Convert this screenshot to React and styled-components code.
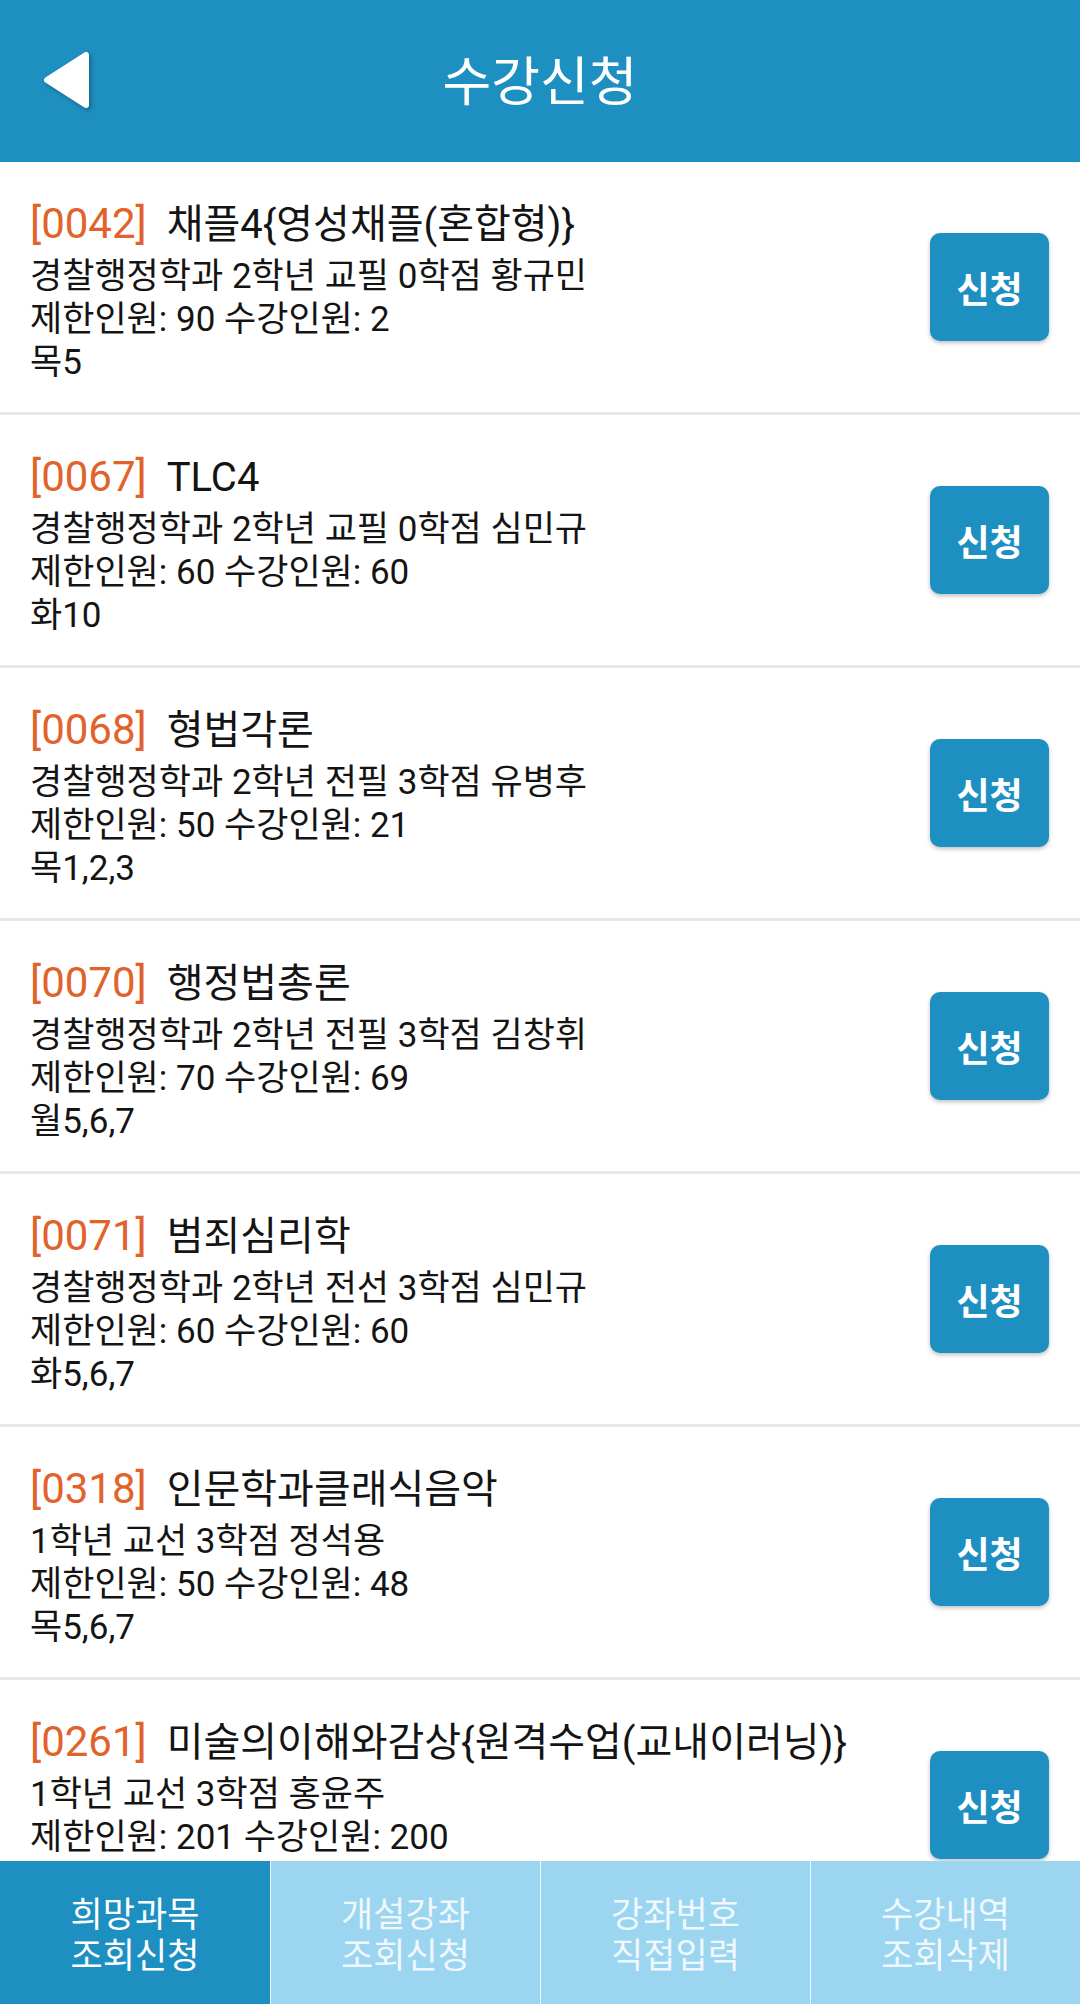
import React from 'react';
import styled, { createGlobalStyle } from 'styled-components'

const GlobalStyle = createGlobalStyle`
  html, body {
    margin: 0;
    padding: 0;
    background: #fff;
  }
  body {
    font-family: "Roboto", "Noto Sans CJK KR", sans-serif;
    -webkit-font-smoothing: antialiased;
  }
`

const Screen = styled.div `
  width: 100%;
  height: 100vh;
  display: flex;
  flex-direction: column;
  overflow: hidden;
  background-color: #fff;
`
const Header = styled.header `
  flex-shrink: 0;
  height: 162px;
  display: grid;
  grid-template-columns: 1fr auto 1fr;
  align-items: center;
  background-color: #1e8fc1;
`
const BackButton = styled.button `
  justify-self: start;
  display: flex;
  align-items: center;
  margin-left: 40px;
  padding: 0;
  border: none;
  background: none;
  cursor: pointer;
  svg{
    filter: drop-shadow(2px 2px 2px rgba(0, 0, 0, 0.3));
  }
`
const Title = styled.h1 `
  margin: 0;
  padding-top: 4px;
  font-size: 53px;
  line-height: 60px;
  font-weight: 400;
  color: #fff;
`
const List = styled.main `
  flex: 1;
  overflow: hidden;
`
const Item = styled.div `
  display: flex;
  flex-direction: row;
  height: 250px;
  padding: 0 31px 0 30px;
  border-bottom: 3px solid #e8e8e8;
`
const Info = styled.div `
  flex: 1;
  min-width: 0;
  padding-top: 38px;
  color: #141414;
`
const CourseTitle = styled.div `
  font-size: 40px;
  line-height: 50px;
  white-space: nowrap;
  margin-bottom: 5px;
`
const Code = styled.span `
  color: #e2622b;
  font-size: 42px;
  line-height: 44px;
  margin-right: 20px;
`
const Line = styled.div `
  font-size: 35px;
  line-height: 43px;
  white-space: nowrap;
`
const ApplyButton = styled.button `
  align-self: center;
  flex-shrink: 0;
  width: 119px;
  height: 108px;
  border: none;
  border-radius: 10px;
  background-color: #1e8fc1;
  color: #fff;
  font-family: "Noto Sans CJK KR", sans-serif;
  font-size: 36px;
  font-weight: 700;
  box-shadow: 0 2px 4px rgba(0, 0, 0, 0.25);
  cursor: pointer;
`
const TabBar = styled.nav `
  flex-shrink: 0;
  height: 143px;
  display: grid;
  grid-template-columns: repeat(4, 1fr);
`
const Tab = styled.div `
  padding-top: 34px;
  text-align: center;
  font-size: 35px;
  line-height: 41px;
  background-color: ${p => p.$active ? '#1e8fc1' : '#9cd5ef'};
  color: ${p => p.$active ? '#fff' : '#eef8fd'};
  border-left: ${p => p.$first ? 'none' : '1px solid rgba(255, 255, 255, 0.85)'};
  cursor: pointer;
`

const courses = [
  { code: '0042', name: '채플4{영성채플(혼합형)}', info: '경찰행정학과 2학년 교필 0학점 황규민', seats: '제한인원: 90 수강인원: 2', time: '목5' },
  { code: '0067', name: 'TLC4', info: '경찰행정학과 2학년 교필 0학점 심민규', seats: '제한인원: 60 수강인원: 60', time: '화10' },
  { code: '0068', name: '형법각론', info: '경찰행정학과 2학년 전필 3학점 유병후', seats: '제한인원: 50 수강인원: 21', time: '목1,2,3' },
  { code: '0070', name: '행정법총론', info: '경찰행정학과 2학년 전필 3학점 김창휘', seats: '제한인원: 70 수강인원: 69', time: '월5,6,7' },
  { code: '0071', name: '범죄심리학', info: '경찰행정학과 2학년 전선 3학점 심민규', seats: '제한인원: 60 수강인원: 60', time: '화5,6,7' },
  { code: '0318', name: '인문학과클래식음악', info: '1학년 교선 3학점 정석용', seats: '제한인원: 50 수강인원: 48', time: '목5,6,7' },
  { code: '0261', name: '미술의이해와감상{원격수업(교내이러닝)}', info: '1학년 교선 3학점 홍윤주', seats: '제한인원: 201 수강인원: 200' },
]

const tabs = [
  ['희망과목', '조회신청'],
  ['개설강좌', '조회신청'],
  ['강좌번호', '직접입력'],
  ['수강내역', '조회삭제'],
]

const BackIcon = () => (
  <svg width="56" height="66" viewBox="0 0 56 66">
    <path d="M46 7 L46 57 L7 32 Z" fill="#fff" stroke="#fff" strokeWidth="6" strokeLinejoin="round" />
  </svg>
)

const App = () => {
  return (
    <Screen>
      <GlobalStyle />
      <Header>
        <BackButton aria-label="back"><BackIcon /></BackButton>
        <Title>수강신청</Title>
        <div />
      </Header>
      <List>
        {courses.map(c => (
          <Item key={c.code}>
            <Info>
              <CourseTitle><Code>[{c.code}]</Code>{c.name}</CourseTitle>
              <Line>{c.info}</Line>
              <Line>{c.seats}</Line>
              {c.time && <Line>{c.time}</Line>}
            </Info>
            <ApplyButton>신청</ApplyButton>
          </Item>
        ))}
      </List>
      <TabBar>
        {tabs.map((t, i) => (
          <Tab key={i} $active={i === 0} $first={i === 0}>
            {t[0]}<br />{t[1]}
          </Tab>
        ))}
      </TabBar>
    </Screen>
  )
}

export default App;
